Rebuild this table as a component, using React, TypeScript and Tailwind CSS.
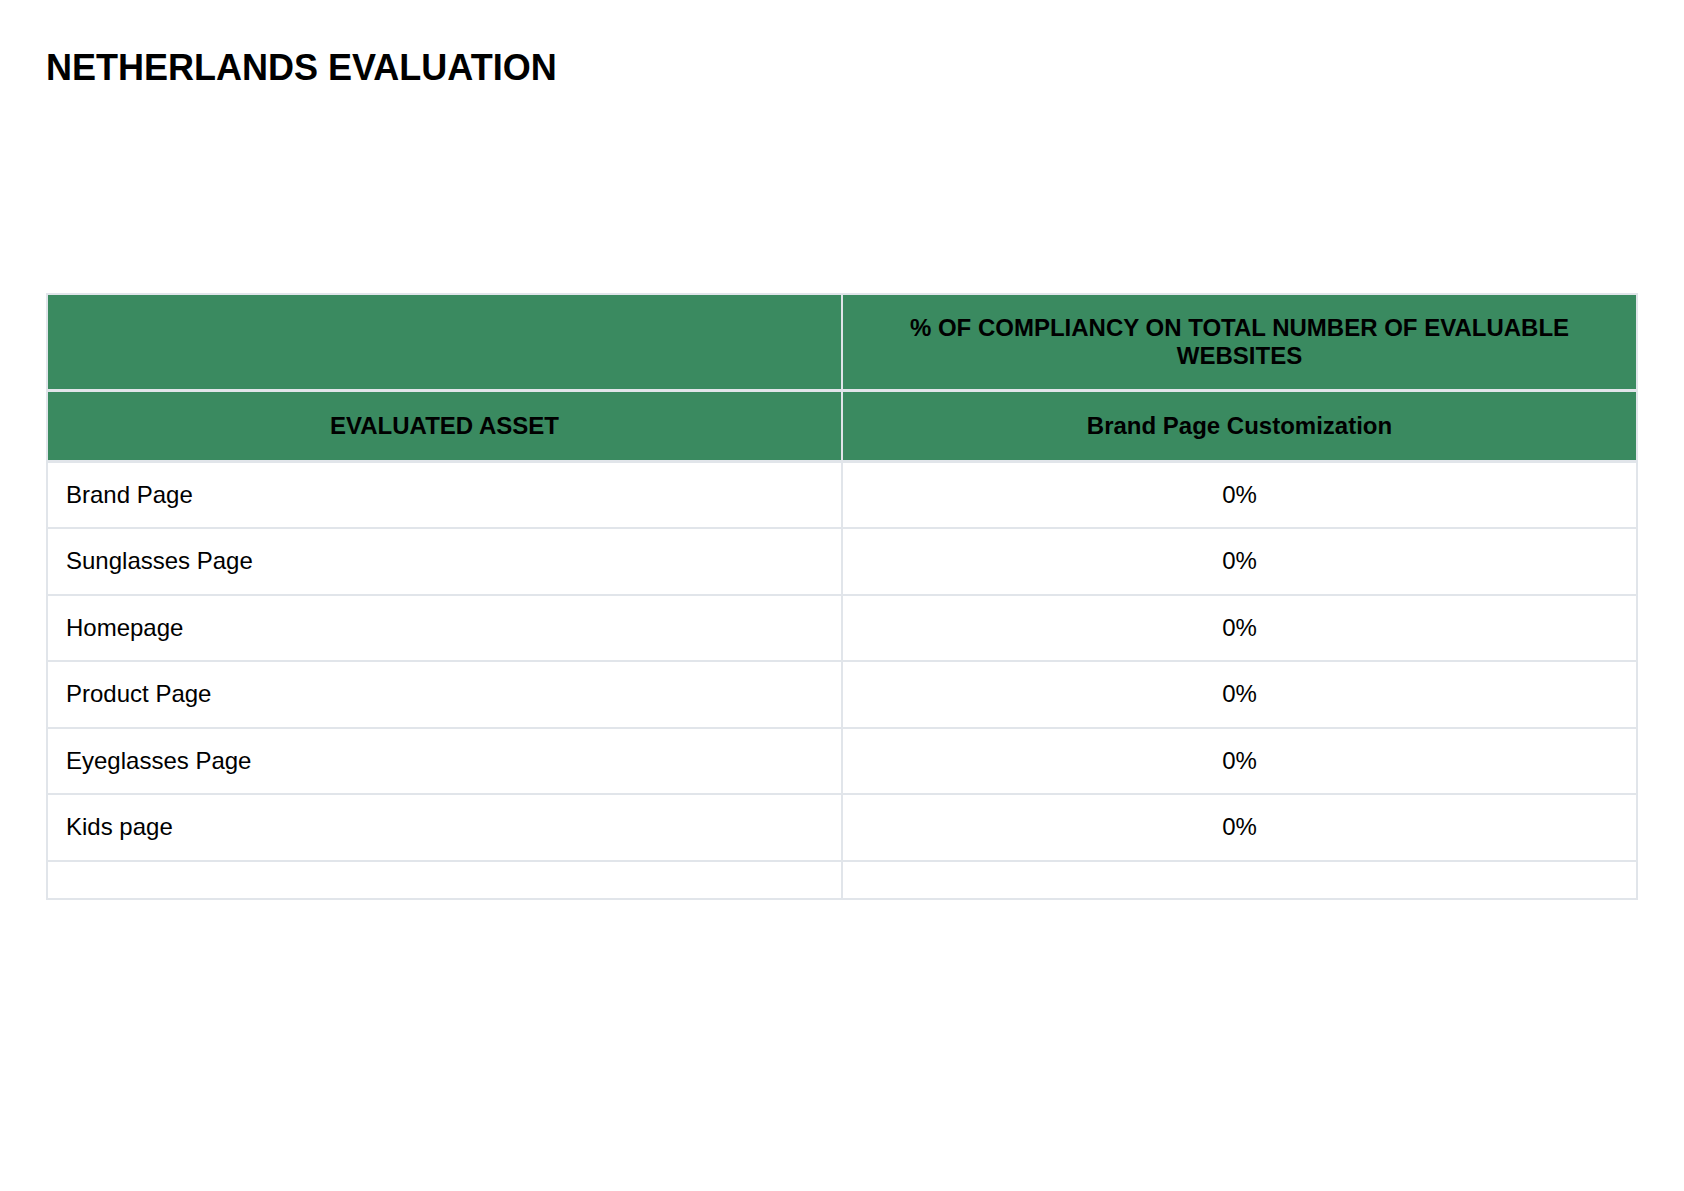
const rows = [
  { asset: "Brand Page", value: "0%" },
  { asset: "Sunglasses Page", value: "0%" },
  { asset: "Homepage", value: "0%" },
  { asset: "Product Page", value: "0%" },
  { asset: "Eyeglasses Page", value: "0%" },
  { asset: "Kids page", value: "0%" },
];

export default function App() {
  return (
    <div className="min-h-screen bg-white px-[46px] pt-[50px] font-['Liberation_Sans',Arial,sans-serif] text-black">
      <h1 className="text-[36px] font-bold leading-[36px]">NETHERLANDS EVALUATION</h1>

      <table className="mt-[207px] w-full table-fixed border-collapse border-2 border-[#e1e5ea] text-[24px] leading-[28.5px]">
        <thead>
          <tr className="bg-[#3a8a60] font-bold">
            <th className="w-1/2 border-2 border-b-[3px] border-[#e1e5ea] px-[18px] py-[18.5px]" />
            <th className="w-1/2 border-2 border-b-[3px] border-[#e1e5ea] px-[18px] py-[18.5px] text-center">
              % OF COMPLIANCY ON TOTAL NUMBER OF EVALUABLE WEBSITES
            </th>
          </tr>
          <tr className="bg-[#3a8a60] font-bold">
            <th className="border-2 border-b-[3px] border-[#e1e5ea] px-[18px] py-[19.5px] text-center">EVALUATED ASSET</th>
            <th className="border-2 border-b-[3px] border-[#e1e5ea] px-[18px] py-[19.5px] text-center">
              Brand Page Customization
            </th>
          </tr>
        </thead>
        <tbody>
          {rows.map((row) => (
            <tr key={row.asset}>
              <td className="border-2 border-[#e1e5ea] px-[18px] py-[18px] text-left">{row.asset}</td>
              <td className="border-2 border-[#e1e5ea] px-[18px] py-[18px] text-center">{row.value}</td>
            </tr>
          ))}
          <tr>
            <td className="border-2 border-[#e1e5ea] px-[18px] py-[18px]" />
            <td className="border-2 border-[#e1e5ea] px-[18px] py-[18px]" />
          </tr>
        </tbody>
      </table>
    </div>
  );
}
